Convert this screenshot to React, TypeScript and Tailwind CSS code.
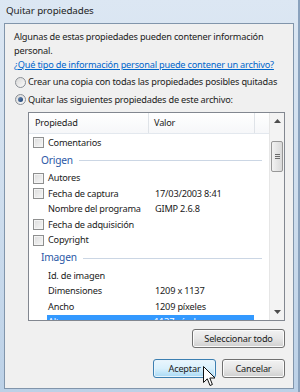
const items: Array<
  | { kind: "item"; label: string; value?: string; check: boolean; selected?: boolean }
  | { kind: "group"; label: string }
> = [
  { kind: "item", label: "Comentarios", check: true },
  { kind: "group", label: "Origen" },
  { kind: "item", label: "Autores", check: true },
  { kind: "item", label: "Fecha de captura", value: "17/03/2003 8:41", check: true },
  { kind: "item", label: "Nombre del programa", value: "GIMP 2.6.8", check: false },
  { kind: "item", label: "Fecha de adquisición", check: true },
  { kind: "item", label: "Copyright", check: true },
  { kind: "group", label: "Imagen" },
  { kind: "item", label: "Id. de imagen", check: false },
  { kind: "item", label: "Dimensiones", value: "1209 x 1137", check: false },
  { kind: "item", label: "Ancho", value: "1209 píxeles", check: false },
  { kind: "item", label: "Alto", value: "1137 píxeles", check: false, selected: true },
];

function Checkbox() {
  return (
    <span className="w-[11px] h-[11px] shrink-0 border border-[#8e8f8f] bg-gradient-to-br from-[#dcdcdc] to-[#f7f7f7] shadow-[inset_0_0_0_1px_#f4f4f4]" />
  );
}

function Radio({ on }: { on?: boolean }) {
  return (
    <span className="w-[11px] h-[11px] shrink-0 rounded-full border border-[#8a8f96] bg-gradient-to-br from-[#d8d8d8] to-[#fbfbfb] flex items-center justify-center">
      {on && (
        <span className="w-[5px] h-[5px] rounded-full bg-gradient-to-br from-[#6f8fb8] to-[#173c6f]" />
      )}
    </span>
  );
}

function Button({ label, width, focused }: { label: string; width: string; focused?: boolean }) {
  return (
    <div
      className={
        focused
          ? `${width} h-[19px] rounded-[3px] border border-[#3c7fb1] bg-gradient-to-b from-[#eaf6fd] via-[#d9f0fc] to-[#a7d9f5] flex items-center justify-center text-[#1a1a1a] shadow-[inset_0_0_0_1px_#e8f4fc]`
          : `${width} h-[19px] rounded-[3px] border border-[#707070] bg-gradient-to-b from-[#f2f2f2] via-[#e6e6e6] to-[#cfcfcf] flex items-center justify-center text-[#1a1a1a] shadow-[inset_0_0_0_1px_#fbfbfb]`
      }
    >
      {label}
    </div>
  );
}

export default function App() {
  return (
    <div className="relative w-[300px] h-[392px] overflow-hidden flex flex-col bg-gradient-to-b from-[#dce7f3] via-[#cfdeee] to-[#bcd1e7] border-r-2 border-[#8aa2bd] font-['Noto_Sans',sans-serif] text-[9.2px] tracking-[-0.2px] text-[#1b1b1b] whitespace-nowrap">
      <div className="h-[23px] shrink-0 flex items-center pl-[6px] text-[9.8px] tracking-[-0.1px] text-[#1e1e1e]">
        Quitar propiedades
      </div>

      <div className="flex-1 ml-[4px] mr-[4px] mb-[3px] border border-[#8195ab] bg-[#f0f0f0] flex flex-col pl-[9px] pr-[8px] pt-[6px]">
        <p className="leading-[14px]">
          Algunas de estas propiedades pueden contener información
          <br />
          personal.
        </p>
        <div className="leading-[14px] text-[#0066cc] underline">
          ¿Qué tipo de información personal puede contener un archivo?
        </div>

        <div className="mt-[1px] h-[18px] flex items-center gap-[2px] pl-[1px]">
          <Radio />
          <span>Crear una copia con todas las propiedades posibles quitadas</span>
        </div>
        <div className="h-[17px] flex items-center gap-[2px] pl-[1px]">
          <Radio on />
          <span>Quitar las siguientes propiedades de este archivo:</span>
        </div>

        <div className="mt-[4px] ml-[14px] h-[209px] border border-[#828790] bg-white flex overflow-hidden">
          <div className="flex-1 flex flex-col overflow-hidden">
            <div className="h-[21px] shrink-0 flex border-b border-[#e3e8ee] bg-gradient-to-b from-white to-[#f6f7f9]">
              <div className="w-[120px] flex items-center pl-[6px] border-r border-[#dfe3e8]">Propiedad</div>
              <div className="w-[106px] flex items-center pl-[5px] border-r border-[#dfe3e8]">Valor</div>
              <div className="flex-1" />
            </div>

            <div className="flex flex-col pt-[1px]">
              {items.map((it, i) =>
                it.kind === "group" ? (
                  <div key={i} className="h-[20px] shrink-0 flex items-center pl-[12px] pr-[7px]">
                    <span className="text-[10.2px] text-[#2c58a6]">{it.label}</span>
                    <span className="flex-1 h-px ml-[6px] bg-[#cbd6e4]" />
                  </div>
                ) : it.selected ? (
                  <div key={i} className="h-[15.5px] shrink-0 flex items-center">
                    <div className="ml-[18px] w-[207px] h-full bg-[#3399ff] flex items-center text-white">
                      <span className="w-[107px] pl-[1px]">{it.label}</span>
                      <span>{it.value}</span>
                    </div>
                  </div>
                ) : (
                  <div key={i} className="h-[15.5px] shrink-0 flex items-center">
                    <div className="w-[120px] flex items-center gap-[4px] pl-[4px]">
                      {it.check ? <Checkbox /> : <span className="w-[11px] shrink-0" />}
                      <span>{it.label}</span>
                    </div>
                    <span className="pl-[6px]">{it.value}</span>
                  </div>
                )
              )}
            </div>
          </div>

          <div className="w-[15px] shrink-0 flex flex-col bg-[#f3f3f3] border-l border-[#e6e6e6]">
            <div className="h-[16px] flex items-center justify-center">
              <svg width="7" height="4" viewBox="0 0 7 4">
                <path d="M0 4 L3.5 0 L7 4 Z" fill="#4d4d4d" />
              </svg>
            </div>
            <div className="mt-[12px] mx-[1px] h-[31px] rounded-[2px] border border-[#979797] bg-gradient-to-r from-[#f2f2f2] to-[#d9d9d9] flex flex-col items-center justify-center gap-[1px]">
              <span className="w-[5px] h-px bg-[#6b6b6b]" />
              <span className="w-[5px] h-px bg-[#6b6b6b]" />
              <span className="w-[5px] h-px bg-[#6b6b6b]" />
            </div>
            <div className="flex-1" />
            <div className="h-[16px] flex items-center justify-center">
              <svg width="7" height="4" viewBox="0 0 7 4">
                <path d="M0 0 L3.5 4 L7 0 Z" fill="#4d4d4d" />
              </svg>
            </div>
          </div>
        </div>

        <div className="mt-[8px] flex justify-end">
          <Button label="Seleccionar todo" width="w-[93px]" />
        </div>
        <div className="mt-[11px] flex justify-end gap-[6px]">
          <Button label="Aceptar" width="w-[63px]" focused />
          <Button label="Cancelar" width="w-[63px]" />
        </div>
      </div>

      <svg className="absolute left-[203px] top-[366px]" width="13" height="21" viewBox="0 0 13 21">
        <path
          d="M0.5 0.5 L0.5 16.5 L4.3 12.8 L7 19.5 L9.4 18.5 L6.8 12 L12 12 Z"
          fill="#ffffff"
          stroke="#111111"
          strokeWidth="1"
          strokeLinejoin="round"
        />
      </svg>
    </div>
  );
}
